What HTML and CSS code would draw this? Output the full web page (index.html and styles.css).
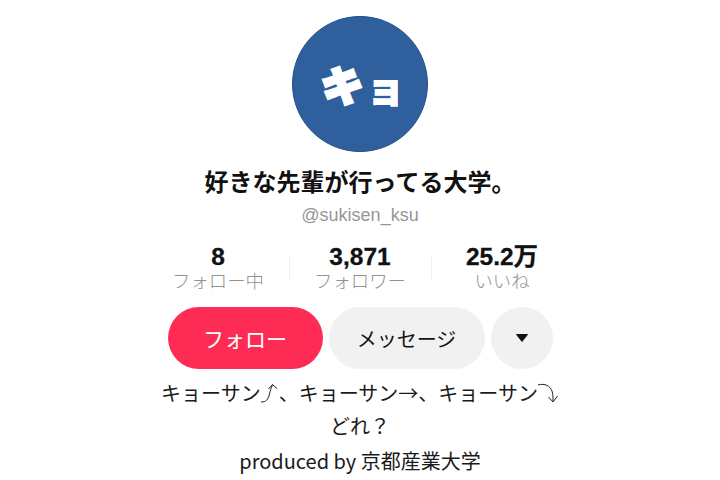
FILE: index.html
```html
<!DOCTYPE html>
<html lang="ja">
<head>
<meta charset="utf-8">
<title>好きな先輩が行ってる大学。</title>
<link rel="stylesheet" href="styles.css">
</head>
<body>
<main class="profile">
  <div class="avatar"><span class="kana-ki">キ</span><span class="kana-yo">ョ</span></div>
  <h1 class="name">好きな先輩が行ってる大学。</h1>
  <div class="handle">@sukisen_ksu</div>
  <div class="stats">
    <div class="stat"><b>8</b><span>フォロー中</span></div>
    <i class="rule"></i>
    <div class="stat"><b>3,871</b><span>フォロワー</span></div>
    <i class="rule"></i>
    <div class="stat"><b>25.2万</b><span>いいね</span></div>
  </div>
  <div class="actions">
    <button class="btn primary">フォロー</button>
    <button class="btn">メッセージ</button>
    <button class="btn round" aria-label="more"><svg width="14" height="10" viewBox="0 0 14 10"><path d="M1.500 1.500h11L7 8.500z" fill="#111" stroke="#111" stroke-linejoin="round"/></svg></button>
  </div>
  <div class="bio">
    <p class="l1">キョーサン<svg class="arrow" width="18" height="22" viewBox="0 0 18 22"><path d="M0 20c5 0 7-2 8.500-8 .6-3 1.500-6 3-9M7.500 7 11.500 2.500 16 6.500" fill="none" stroke="#222" stroke-width="1"/></svg>、キョーサン→、キョーサン<svg class="arrow" width="21" height="22" viewBox="0 0 21 22"><path d="M0 3c7-2 12 1 14 6 1 3 1 6 1 10M10.500 15l4.500 5 4.500-6" fill="none" stroke="#222" stroke-width="1"/></svg></p>
    <p class="l2">どれ？</p>
    <p class="l3">produced by 京都産業大学</p>
  </div>
</main>
</body>
</html>
```
FILE: styles.css
```css
* { box-sizing: border-box; }
html, body { margin: 0; height: 480px; overflow: hidden; background: #fff; }
body { font-family: "Liberation Sans", "Noto Sans CJK JP", sans-serif; color: #161616; }
.profile { display: flex; flex-direction: column; align-items: center; padding-top: 16px; }
.avatar {
  width: 136px; height: 136px; border-radius: 50%;
  background: #2f5f9c; border: 1px solid #24508a;
  display: flex; align-items: center; justify-content: center; gap: 3px;
  color: #fff; font-family: "Noto Sans CJK JP", sans-serif; font-weight: 900;
  padding-left: 6px;
}
.kana-ki { font-size: 42px; line-height: 1; transform: rotate(-10deg); -webkit-text-stroke: 3px #fff; }
.kana-yo { font-size: 38px; line-height: 1; margin-top: 3px; -webkit-text-stroke: 1.500px #fff; }
.name { margin: 13px 0 0; font-size: 24px; line-height: 32px; font-weight: 700; font-family: "Noto Sans CJK JP", sans-serif; color: #111; }
.handle { margin-top: 7px; font-size: 18px; line-height: 22px; color: #969696; }
.stats { display: flex; align-items: center; margin-top: 18px; }
.stat { width: 142px; display: flex; flex-direction: column; align-items: center; }
.stat b { font-size: 24.500px; line-height: 25px; font-weight: 700; color: #111; -webkit-text-stroke: .3px #111; }
.stat span { font-size: 18.400px; line-height: 22px; color: #929292; font-family: "Noto Sans CJK JP", sans-serif; font-weight: 300; }
.rule { width: 1px; height: 24px; margin: 0 -1px 0 0; background: #efefef; }
.actions { display: flex; gap: 6px; margin-top: 16px; }
.btn {
  width: 156px; height: 62px; border: 0; border-radius: 31px; padding: 0;
  background: #f1f1f1; color: #111; font: 400 20px "Noto Sans CJK JP", sans-serif;
  display: flex; align-items: center; justify-content: center;
}
.primary { background: #fe2c55; color: #fff; width: 155px; font-size: 21px; }
.round { width: 62px; }
.bio { display: flex; flex-direction: column; align-items: center; margin-top: 8px; font-family: "Noto Sans CJK JP", sans-serif; font-size: 20px; color: #1a1a1a; font-weight: 400; }
.bio p { margin: 0; white-space: nowrap; }
.l1 { line-height: 32px; height: 32px; display: flex; align-items: center; }
.l2 { line-height: 33px; }
.l3 { line-height: 38px; }
.arrow { flex: none; }
```
